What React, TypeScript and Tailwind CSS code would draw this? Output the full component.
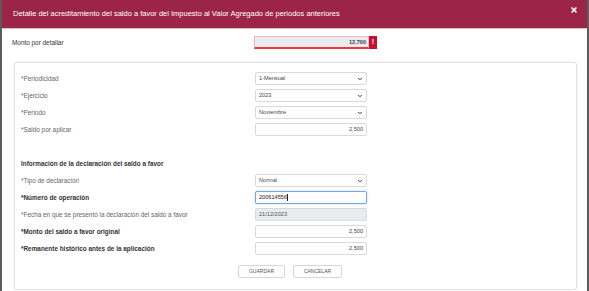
import { ChevronDown, X } from "lucide-react";

const font = { fontFamily: '"Liberation Sans", Arial, sans-serif' };

type Row = {
    label: string;
    bold?: boolean;
    kind: 'select' | 'input' | 'focus' | 'disabled';
    value: string;
};

const topRows: Row[] = [
    { label: '*Periodicidad', kind: 'select', value: '1-Mensual' },
    { label: '*Ejercicio', kind: 'select', value: '2023' },
    { label: '*Periodo', kind: 'select', value: 'Noviembre' },
    { label: '*Saldo por aplicar', kind: 'input', value: '2,500' },
];

const declRows: Row[] = [
    { label: '*Tipo de declaración', kind: 'select', value: 'Normal' },
    { label: '*Número de operación', bold: true, kind: 'focus', value: '200614556' },
    { label: '*Fecha en que se presentó la declaración del saldo a favor', kind: 'disabled', value: '21/12/2023' },
    { label: '*Monto del saldo a favor original', bold: true, kind: 'input', value: '2,500' },
    { label: '*Remanente histórico antes de la aplicación', bold: true, kind: 'input', value: '2,500' },
];

const Field = ({ row }: { row: Row }) => {
    if (row.kind === 'select') {
        return (
            <div className="flex items-center justify-between w-[112px] h-[13px] border border-[#d9d9d9] rounded-[2px] bg-white pl-[3px] pr-[3px] text-[5.6px] text-[#444]">
                <span>{row.value}</span>
                <ChevronDown size={6} strokeWidth={4} className="text-[#333]" />
            </div>
        );
    }
    if (row.kind === 'focus') {
        return (
            <div className="flex items-center w-[112px] h-[13px] border border-[#7aa7e0] rounded-[2px] bg-white px-[3px] text-[5.6px] text-[#222] shadow-[0_0_2px_#a9c8f0]">
                <span>{row.value}</span>
                <span className="w-px h-[7px] bg-[#222]" />
            </div>
        );
    }
    if (row.kind === 'disabled') {
        return (
            <div className="flex items-center w-[112px] h-[13px] border border-[#d9d9d9] rounded-[2px] bg-[#e9ecef] px-[3px] text-[5.6px] text-[#555]">
                {row.value}
            </div>
        );
    }
    return (
        <div className="flex items-center justify-end w-[112px] h-[13px] border border-[#d9d9d9] rounded-[2px] bg-white px-[3px] text-[5.6px] text-[#444]">
            {row.value}
        </div>
    );
};

const FormRow = ({ row }: { row: Row }) => (
    <div className="flex items-center h-[17px]">
        <div className={`w-[234px] text-[6.4px] ${row.bold ? 'font-bold text-[#333]' : 'text-[#666]'}`}>{row.label}</div>
        <Field row={row} />
    </div>
);

const App = () => {
    return (
        <div className="w-[589px] h-[291px] bg-white border-x-2 border-[#5c5c5c] overflow-hidden" style={font}>
            {/* Header */}
            <div className="flex items-center justify-between h-[29px] bg-[#9d2449] border-b border-[#d9c2c9] pl-[11px] pr-[9px]">
                <p className="text-white text-[7.5px]">Detalle del acreditamiento del saldo a favor del Impuesto al Valor Agregado de periodos anteriores</p>
                <X size={8} strokeWidth={5} className="text-white -mt-[8px]" />
            </div>

            {/* Monto por detallar */}
            <div className="flex items-center pl-[10px] mt-[7px] h-[13px]">
                <div className="w-[242px] text-[6.4px] text-[#333]">Monto por detallar</div>
                <div className="flex h-[13px]">
                    <div className="flex items-center justify-end w-[115px] bg-[#e9ecef] border border-[#e4b6bf] border-b-2 border-b-[#f0353f] px-[2px] text-[5.6px] font-bold text-[#444]">12,700</div>
                    <div className="flex items-center justify-center w-[8px] bg-[#c8102e] text-white text-[7px] font-bold">!</div>
                </div>
            </div>

            {/* Card */}
            <div className="ml-[12px] mt-[13px] w-[563px] h-[228px] border border-[#e2e2e2] rounded-[3px] shadow-[0_0_2px_rgba(0,0,0,0.12)] pl-[6px] pt-[7px]">
                {topRows.map(row => (
                    <FormRow key={row.label} row={row} />
                ))}

                <div className="h-[17px]" />
                <div className="h-[17px] flex items-center text-[6.4px] font-bold text-[#333]">Información de la declaración del saldo a favor</div>

                {declRows.map(row => (
                    <FormRow key={row.label} row={row} />
                ))}

                <div className="flex gap-[8px] mt-[8px] pl-[217px]">
                    <button className="w-[47px] h-[13px] border border-[#d6d6d6] rounded-[2px] bg-white text-[5px] text-[#555]">GUARDAR</button>
                    <button className="w-[49px] h-[13px] border border-[#d6d6d6] rounded-[2px] bg-white text-[5px] text-[#555]">CANCELAR</button>
                </div>
            </div>
        </div>
    );
};

export default App;
